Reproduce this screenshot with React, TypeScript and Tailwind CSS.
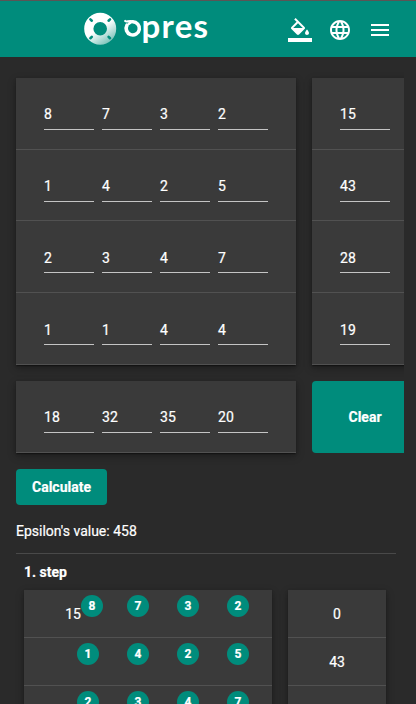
import React from "react";

const shadow =
  "shadow-[0_2px_1px_-1px_rgba(0,0,0,0.2),0_1px_1px_0_rgba(0,0,0,0.14),0_1px_3px_0_rgba(0,0,0,0.12),0_3px_8px_rgba(0,0,0,0.3)]";

function Field({ value, low }: { value: number; low: boolean }) {
  return (
    <div
      className={
        "h-8 w-[50px] border-b border-[#c4c4c4] text-[14px] leading-[19px] tracking-[0.1px] text-white " +
        (low ? "pt-[8px]" : "pt-[7px]")
      }
    >
      {value}
    </div>
  );
}

function InputTable({ rows, className }: { rows: number[][]; className: string }) {
  return (
    <div className={"shrink-0 bg-[#3a3a3a] " + shadow + " " + className}>
      {rows.map((row, i) => (
        <div key={i} className={"flex gap-2 border-b border-[#515151] pl-7 pt-5 " + (i === 1 ? "h-[71px]" : "h-[72px]")}>
          {row.map((v, j) => (
            <Field key={j} value={v} low={i > 1} />
          ))}
        </div>
      ))}
    </div>
  );
}

function Logo() {
  return (
    <svg width="126" height="36" viewBox="0 0 126 36" fill="none">
      <defs>
        <linearGradient id="ring" x1="8" y1="4" x2="28" y2="33" gradientUnits="userSpaceOnUse">
          <stop offset="0.45" stopColor="#fff" />
          <stop offset="1" stopColor="#6bbcb2" />
        </linearGradient>
      </defs>
      <circle cx="16.2" cy="18.8" r="11.4" stroke="url(#ring)" strokeWidth="9.2" />
      <g stroke="#008c7c" strokeWidth="2.6" strokeLinecap="round">
        <path d="M6.4 9.4l1.4 1.3M26 9.4l-1.4 1.3M6.4 28.2l1.4-1.3M26 28.2l-1.4-1.3" />
      </g>
      <g stroke="#fff" strokeLinecap="round" strokeLinejoin="round">
        <path d="M43 15.2a6.6 6.6 0 1 0 5.7-3.4" strokeWidth="3.6" />
        <path d="M41.2 11c1.6 1.6 3.2-.8 7.5.4l-4 2.6" strokeWidth="2.2" />
      </g>
    </svg>
  );
}

function Header() {
  return (
    <header className="flex h-[57px] items-start border-t border-[#5b5555] bg-[#008c7c] pl-[84px]">
      <div className="relative mt-[9px] h-9 w-[126px]">
        <Logo />
        <span className="absolute left-[57.5px] top-[-3px] font-['Lato'] text-[33px] font-bold leading-9 tracking-[1.3px] text-white [-webkit-text-stroke:0px]">
          pres
        </span>
      </div>
      <svg className="ml-[78px] mt-[17px]" width="24" height="24" viewBox="0 0 24 24" fill="#fff">
        <path d="M16.56 8.94L7.62 0 6.21 1.41l2.38 2.38-5.15 5.15c-.59.59-.59 1.54 0 2.12l5.5 5.5c.29.29.68.44 1.06.44s.77-.15 1.06-.44l5.5-5.5c.59-.58.59-1.53 0-2.12zM5.21 10L10 5.21 14.79 10H5.21zM19 11.5s-2 2.17-2 3.5c0 1.1.9 2 2 2s2-.9 2-2c0-1.33-2-3.5-2-3.5zM0 20h24v4H0v-4z" />
      </svg>
      <svg className="ml-4 mt-[17px]" width="24" height="24" viewBox="0 0 24 24" fill="#fff">
        <path d="M11.99 2C6.47 2 2 6.48 2 12s4.47 10 9.99 10C17.52 22 22 17.52 22 12S17.52 2 11.99 2zm6.93 6h-2.95c-.32-1.25-.78-2.45-1.38-3.56 1.84.63 3.37 1.91 4.33 3.56zM12 4.04c.83 1.2 1.48 2.53 1.91 3.96h-3.82c.43-1.43 1.08-2.76 1.91-3.96zM4.26 14C4.1 13.36 4 12.69 4 12s.1-1.36.26-2h3.38c-.08.66-.14 1.32-.14 2s.06 1.34.14 2H4.26zm.82 2h2.95c.32 1.25.78 2.45 1.38 3.56-1.84-.63-3.37-1.9-4.33-3.56zm2.95-8H5.08c.96-1.66 2.49-2.93 4.33-3.56C8.81 5.55 8.35 6.75 8.03 8zM12 19.96c-.83-1.2-1.48-2.53-1.91-3.96h3.82c-.43 1.43-1.08 2.76-1.91 3.96zM14.34 14H9.66c-.09-.66-.16-1.32-.16-2s.07-1.35.16-2h4.68c.09.65.16 1.32.16 2s-.07 1.34-.16 2zm.25 5.56c.6-1.11 1.06-2.31 1.38-3.56h2.95c-.96 1.65-2.49 2.93-4.33 3.56zM16.36 14c.08-.66.14-1.32.14-2s-.06-1.34-.14-2h3.38c.16.64.26 1.31.26 2s-.1 1.36-.26 2h-3.38z" />
      </svg>
      <svg className="ml-4 mt-[17px]" width="24" height="24" viewBox="0 0 24 24" fill="#fff">
        <path d="M3 18h18v-2H3v2zm0-5h18v-2H3v2zm0-7v2h18V6H3z" />
      </svg>
    </header>
  );
}

function Badge({ value }: { value: number }) {
  return (
    <span className="flex size-[22px] shrink-0 items-center justify-center rounded-full bg-[#008c7c] text-[12px] font-bold leading-none text-white">
      {value}
    </span>
  );
}

const costs = [
  [8, 7, 3, 2],
  [1, 4, 2, 5],
  [2, 3, 4, 7],
  [1, 1, 4, 4],
];

const steps = [
  { allocated: 15, supply: "0" },
  { allocated: null, supply: "43" },
  { allocated: null, supply: "" },
];

export default function App() {
  return (
    <div className="h-[704px] w-[416px] overflow-hidden bg-[#2a2a2a] font-['Roboto',sans-serif] text-[14px] text-white [-webkit-text-stroke:0.2px_white]">
      <Header />
      <main>
        <div className="mr-3 overflow-hidden pb-4 pl-4 pt-[21px]">
          <div className="flex gap-4">
            <InputTable rows={costs} className="w-[280px]" />
            <InputTable rows={[[15], [43], [28], [19]]} className="w-[106px]" />
          </div>
          <div className="mt-4 flex gap-4">
            <InputTable rows={[[18, 32, 35, 20]]} className="w-[280px]" />
            <button className="h-[72px] w-[106px] shrink-0 rounded bg-[#008c7c] text-[14px] font-bold">Clear</button>
          </div>
        </div>
        <div className="px-4">
          <button className="block h-9 w-[91px] rounded bg-[#008c7c] text-[14px] font-bold">Calculate</button>
          <p className="mt-4 h-5 leading-5">Epsilon's value: 458</p>
        </div>
        <div className="ml-4 mr-5 mt-3 border-t border-[#494949] px-2 pt-2">
          <h2 className="h-5 font-bold leading-5">1. step</h2>
          <div className="mt-2 flex gap-4">
            <div className={"w-[248px] bg-[#3a3a3a] " + shadow}>
              {steps.map((s, i) => (
                <div key={i} className="flex h-12 border-b border-[#515151] pt-[5px]">
                  <span className={s.allocated ? "w-[57px] pt-2 text-right leading-[22px]" : "w-[53px]"}>
                    {s.allocated}
                  </span>
                  <div className="flex gap-7">
                    {costs[i].map((v, j) => (
                      <div key={j} className={s.allocated && j === 0 ? "-mr-1" : ""}>
                        <Badge value={v} />
                      </div>
                    ))}
                  </div>
                </div>
              ))}
            </div>
            <div className={"w-[98px] bg-[#3a3a3a] " + shadow}>
              {steps.map((s, i) => (
                <div key={i} className="flex h-12 items-center justify-center border-b border-[#515151] pt-[1px]">
                  {s.supply}
                </div>
              ))}
            </div>
          </div>
        </div>
      </main>
    </div>
  );
}
